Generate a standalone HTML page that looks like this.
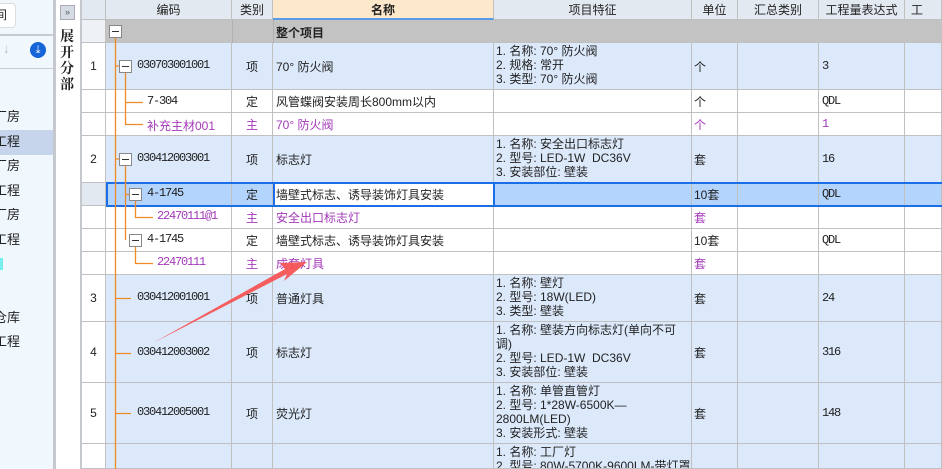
<!DOCTYPE html><html><head><meta charset="utf-8"><style>
*{margin:0;padding:0;box-sizing:border-box}
html,body{width:942px;height:469px;overflow:hidden}
body{background:#fff;font-family:"Liberation Sans","Noto Sans CJK SC",sans-serif;font-size:12px;color:#222;position:relative}
.a{position:absolute}
.c{position:absolute;border-right:1px solid #c0c0c0;border-bottom:1px solid #c0c0c0;white-space:nowrap;display:flex;align-items:center;overflow:hidden}
.m{font-family:"Liberation Mono","Noto Sans CJK SC",monospace;font-size:12px;letter-spacing:-1.2px}
.p{color:#a23ab8}
.box{position:absolute;width:13px;height:13px;border:1px solid #888;background:#fff}
.box:after{content:"";position:absolute;left:2px;top:5px;width:7px;height:1px;background:#333}
.f{line-height:14px;white-space:normal;display:block;padding-top:1px}
</style></head><body>
<div class="a" style="left:0;top:0;width:53px;height:469px;background:#f1f8fd"></div>
<div class="a" style="left:0;top:3px;width:16px;height:25px;background:#fff;border:1px solid #ddd;border-left:none;border-radius:0 4px 4px 0;font-size:12px;line-height:23px;overflow:hidden"><span style="margin-left:-5px">间</span></div>
<div class="a" style="left:0;top:34px;width:53px;height:2px;background:#c8ccd0"></div>
<div class="a" style="left:3px;top:41px;color:#bbb;font-size:13px">↓</div>
<div class="a" style="left:30px;top:42px;width:16px;height:16px;border-radius:50%;background:#1565d8;color:#fff;font-size:11px;line-height:16px;text-align:center">⤓</div>
<div class="a" style="left:0;top:68px;width:53px;height:1px;background:#c8ccd0"></div>
<div class="a" style="left:0;top:130px;width:53px;height:25px;background:#c6d4ec"></div>
<div class="a" style="left:-6px;top:105px;font-size:13px;line-height:24.6px">
<div>厂房</div><div>工程</div><div>厂房</div><div>工程</div><div>厂房</div><div>工程</div></div>
<div class="a" style="left:0;top:258px;width:3px;height:12px;background:#7ee"></div>
<div class="a" style="left:-6px;top:306px;font-size:13px;line-height:24px"><div>仓库</div><div>工程</div></div>
<div class="a" style="left:53px;top:0;width:3px;height:469px;background:#c5c9cd"></div>
<div class="a" style="left:56px;top:0;width:24px;height:469px;background:#fff"></div>
<div class="a" style="left:60px;top:5px;width:15px;height:15px;background:#d6dce3;border:1px solid #aab;color:#556;font-size:9px;line-height:13px;text-align:center">»</div>
<div class="a" style="left:60px;top:28px;width:16px;font-size:14px;font-weight:bold;line-height:16px;font-family:'Noto Serif CJK SC',serif">展<br>开<br>分<br>部</div>
<div class="a" style="left:80px;top:0;width:2px;height:469px;background:#c5c9cd"></div>

<div class="c" style="left:82px;top:0;width:24px;height:20px;background:#e3e9f1"></div>
<div class="c" style="left:106px;top:0;width:126px;height:20px;background:#e3e9f1;justify-content:center">编码</div>
<div class="c" style="left:232px;top:0;width:41px;height:20px;background:#e3e9f1;justify-content:center">类别</div>
<div class="c" style="left:273px;top:0;width:221px;height:20px;background:#fde8cc;justify-content:center;font-weight:bold;border-bottom:2px solid #5a9be8">名称</div>
<div class="c" style="left:494px;top:0;width:198px;height:20px;background:#e3e9f1;justify-content:center">项目特征</div>
<div class="c" style="left:692px;top:0;width:46px;height:20px;background:#e3e9f1;justify-content:center">单位</div>
<div class="c" style="left:738px;top:0;width:81px;height:20px;background:#e3e9f1;justify-content:center">汇总类别</div>
<div class="c" style="left:819px;top:0;width:86px;height:20px;background:#e3e9f1;justify-content:center">工程量表达式</div>
<div class="c" style="left:905px;top:0;width:37px;height:20px;background:#e3e9f1;padding-left:6px">工</div>

<div class="c" style="left:82px;top:20px;width:24px;height:23px;background:#eef2f7"></div>
<div class="c" style="left:106px;top:20px;width:836px;height:23px;background:#c3c3c3;border-right:none"></div>
<div class="a" style="left:232px;top:20px;width:1px;height:23px;background:#b0b0b0"></div>
<div class="a" style="left:273px;top:20px;width:1px;height:23px;background:#b0b0b0"></div>
<div class="a" style="left:276px;top:24px;font-weight:bold;font-size:12px">整个项目</div>

<div id="rows"></div>
<script>
var cols=[[82,24],[106,126],[232,41],[273,221],[494,198],[692,46],[738,81],[819,86],[905,37]];
var B='#dce9fb',W='#fff';
var rows=[
[43,47,B,'1','',0,'项','70° 防火阀','1. 名称: 70° 防火阀<br>2. 规格: 常开<br>3. 类型: 70° 防火阀','个','3',0],
[90,23,W,'','',0,'定','风管蝶阀安装周长800mm以内','','个','QDL',0],
[113,23,W,'','',0,'主','70° 防火阀','','个','1',1],
[136,47,B,'2','',0,'项','标志灯','1. 名称: 安全出口标志灯<br>2. 型号: LED-1W&nbsp;&nbsp;DC36V<br>3. 安装部位: 壁装','套','16',0],
[183,23,'#b3d4fc','','',0,'定','墙壁式标志、诱导装饰灯具安装','','10套','QDL',0],
[206,23,W,'','',0,'主','安全出口标志灯','','套','',1],
[229,23,W,'','',0,'定','墙壁式标志、诱导装饰灯具安装','','10套','QDL',0],
[252,23,W,'','',0,'主','成套灯具','','套','',1],
[275,47,B,'3','',0,'项','普通灯具','1. 名称: 壁灯<br>2. 型号: 18W(LED)<br>3. 类型: 壁装','套','24',0],
[322,61,B,'4','',0,'项','标志灯','1. 名称: 壁装方向标志灯(单向不可调)<br>2. 型号: LED-1W&nbsp;&nbsp;DC36V<br>3. 安装部位: 壁装','套','316',0],
[383,61,B,'5','',0,'项','荧光灯','1. 名称: 单管直管灯<br>2. 型号: 1*28W-6500K—2800LM(LED)<br>3. 安装形式: 壁装','套','148',0],
[444,25,B,'','',0,'','','1. 名称: 工厂灯<br>2. 型号: 80W-5700K-9600LM-带灯罩','',' ',0]];
var h='';
rows.forEach(function(r,i){
 var t=r[0],hh=r[1],bg=r[2],pc=r[11]?' p':'';
 for(var k=0;k<9;k++){
  var c=cols[k],b=(k==0)?(i==4?'#e3e9f1':'#fff'):bg,txt='',st='';
  if(k==0){txt=r[3];st='justify-content:center';}
  if(k==2){txt=r[6];st='justify-content:center';}
  if(k==3){txt=r[7];st='padding-left:3px';if(i==4)b='#fff';}
  if(k==4){txt='<div class="f">'+r[8]+'</div>';st='padding-left:2px;align-items:'+(hh>24?'flex-start':'center');}
  if(k==5){txt=r[9];st='padding-left:2px';}
  if(k==7){txt='<span class="m">'+r[10]+'</span>';st='padding-left:3px';}
  h+='<div class="c'+(k==2||k==3||k==5||k==7?pc:'')+'" style="left:'+c[0]+'px;top:'+t+'px;width:'+c[1]+'px;height:'+hh+'px;background:'+b+';'+st+'">'+txt+'</div>';
 }
});
document.getElementById('rows').innerHTML=h;
</script>
<div class="a m" style="left:137px;top:58px">030703001001</div>
<div class="a m" style="left:147px;top:94px">7-304</div>
<div class="a p" style="left:147px;top:117px;font-size:12px">补充主材001</div>
<div class="a m" style="left:137px;top:151px">030412003001</div>
<div class="a m" style="left:147px;top:186px">4-1745</div>
<div class="a m p" style="left:157px;top:209px">22470111@1</div>
<div class="a m" style="left:147px;top:232px">4-1745</div>
<div class="a m p" style="left:157px;top:255px">22470111</div>
<div class="a m" style="left:137px;top:290px">030412001001</div>
<div class="a m" style="left:137px;top:345px">030412003002</div>
<div class="a m" style="left:137px;top:405px">030412005001</div>
<div class="a" style="left:106px;top:182px;width:836px;height:25px;border:2px solid #1a6fe8;border-right:none"></div>
<div class="a" style="left:273px;top:182px;width:222px;height:25px;border:2px solid #1a6fe8"></div>
<svg class="a" style="left:0;top:0" width="942" height="469"><g stroke="#f08a24" stroke-width="1.3" fill="none">
<path d="M115.5 38V469M115.5 66H119M125.5 72V124.5H143M125.5 102.5H143M115.5 159H119M125.5 165V240M125.5 194.5H129M135.5 200V217.5H153M135.5 246V263.5H153M115.5 298.5H131M115.5 353.5H131M115.5 413.5H131"/></g>
<polygon fill="#f55555" opacity="0.95" points="153,343 287,274 284,281 307,262 280,263 285,269"/>
</svg>
<div class="box" style="left:109px;top:25px"></div>
<div class="box" style="left:119px;top:60px"></div>
<div class="box" style="left:119px;top:153px"></div>
<div class="box" style="left:129px;top:188px"></div>
<div class="box" style="left:129px;top:234px"></div>
</body></html>
